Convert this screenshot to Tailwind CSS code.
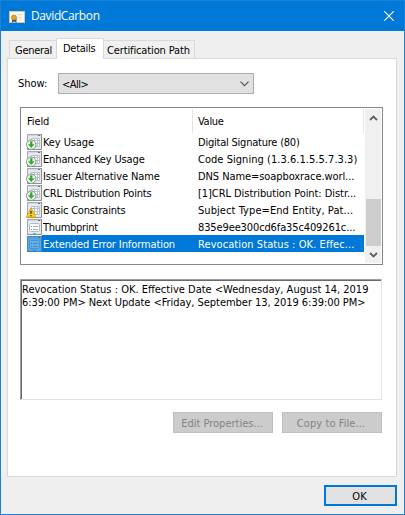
<!DOCTYPE html>
<html lang="en">
<head>
<meta charset="utf-8">
<title>DavidCarbon</title>
<script src="https://cdn.jsdelivr.net/npm/@tailwindcss/browser@4"></script>
</head>
<body class="w-[405px] h-[515px] overflow-hidden font-['DejaVu_Sans_Condensed','DejaVu_Sans',sans-serif] text-[11px] leading-[13px] text-black whitespace-nowrap">

<svg class="hidden">
  <defs>
    <g id="doc">
      <rect x="1" y="0" width="15" height="16" fill="#e6eaee"/>
      <path d="M1.5 16V.5H15" fill="none" stroke="#a4a9ae"/>
      <path d="M1 15.5h14.5V0" fill="none" stroke="#8b9197"/>
      <path d="M2 1.5h13" stroke="#d3d7db"/>
      <path d="M12 1.5h2" stroke="#6d747b"/>
    </g>
    <g id="table">
      <rect x="5" y="4" width="9" height="9" fill="#fff"/>
      <path d="M5.5 4.5h8v8h-8zM5.5 6.5h8M5.5 9.5h8M8.5 4.5v8M11.5 4.5v8" fill="none" stroke="#b9c0ca"/>
    </g>
    <g id="down">
      <use href="#doc"/><use href="#table"/>
      <circle cx="5.2" cy="10.7" r="4.7" fill="#fcfdfc" stroke="#868e88"/>
      <path d="M4.2 7.4h2v3h2L5.2 13.8 2.2 10.4h2z" fill="#2fae2b" stroke="#1f9c20" stroke-width=".4"/>
    </g>
    <g id="warn">
      <use href="#doc"/><use href="#table"/>
      <path d="M5 6 9.8 15.2H.2z" fill="#f6d21c" stroke="#cfa310" stroke-width=".9" stroke-linejoin="round"/>
      <path d="M5 8.8v3.2M5 13v1.2" stroke="#3d3106" stroke-width="1.2"/>
    </g>
    <g id="prop">
      <use href="#doc"/>
      <rect x="3.5" y="4.5" width="10" height="8" rx="1" fill="#fff" stroke="#b4bac3"/>
      <path d="M5 7.5h1M5 10.5h1" stroke="#4f9fd4"/>
      <path d="M7 7.5h5M7 10.5h5" stroke="#a4aab1"/>
      <path d="M7 14.5h3" stroke="#35c4ee"/>
    </g>
  </defs>
</svg>

<div class="w-full h-full flex flex-col border border-[#1883d7] bg-[#efefef]">
  <header class="h-[30px] shrink-0 bg-[#0078d7] text-white flex items-center pl-2 pr-[10px]">
    <svg class="w-4 h-3 shrink-0 mt-px" viewBox="0 0 16 12">
      <rect x=".5" y=".5" width="15" height="11" fill="#fbf7ee" stroke="#d9c8ac"/>
      <path d="M8 3.5h5M9 6.5h4" stroke="#e4dccd"/>
      <path d="M3 7h4.5v5L5.2 10.6 3 12z" fill="#2e5da8"/>
      <circle cx="5" cy="6.5" r="2.6" fill="#e3a31b" stroke="#b67a0a" stroke-width=".6"/>
    </svg>
    <span class="ml-[6px] font-['Open_Sans',sans-serif] text-[12px] leading-4 tracking-[-0.38px]">DavidCarbon</span>
    <svg class="ml-auto mb-px w-[10px] h-[10px]" viewBox="0 0 10 10"><path d="M.3 .3 9.7 9.7M9.7 .3 .3 9.7" stroke="#fff" stroke-width="1.1"/></svg>
  </header>

  <nav class="h-[27px] shrink-0 flex items-end pl-[8px] pt-[7px] relative z-10">
    <div class="w-[47px] h-[18px] border border-b-0 border-r-0 border-[#d9d9d9] bg-[#f0f0f0] pl-[5px] pt-[3px] tracking-[-0.29px]">General</div>
    <div class="w-[48px] h-[21px] -mb-px border border-b-0 border-[#d9d9d9] bg-white pl-[6px] pt-[3px] tracking-[-0.27px]">Details</div>
    <div class="w-[91px] h-[18px] border border-b-0 border-l-0 border-[#d9d9d9] bg-[#f0f0f0] pl-[3px] pt-[3px] tracking-[-0.13px]">Certification Path</div>
  </nav>

  <main class="ml-[6px] w-[390px] h-[419px] shrink-0 bg-white border border-[#d9d9d9] pl-[12px] flex flex-col items-start">
    <div class="flex items-center mt-[14px] h-[21px] -ml-[2px]">
      <span class="w-[39px]">Show:</span>
      <div class="w-[196px] h-[21px] bg-[#e1e1e1] border border-[#adadad] flex items-center pl-[3px] pr-[4px] ml-px">
        <span class="tracking-[-0.5px] pt-[2px]">&lt;All&gt;</span>
        <svg class="ml-auto w-[9px] h-[6px]" viewBox="0 0 9 6"><path d="M.5 .7 4.5 4.7 8.5 .7" fill="none" stroke="#555" stroke-width="1.2"/></svg>
      </div>
    </div>

    <section class="mt-[13px] w-[363px] h-[158px] border border-[#828790] flex p-px">
      <div class="w-[343px] flex flex-col">
        <div class="h-[24px] flex items-center">
          <span class="w-[171px] h-full border-r border-[#e5e5e5] pl-[5px] pt-[6px] tracking-[-0.1px]">Field</span>
          <span class="w-[171px] h-full border-r border-[#e5e5e5] pl-[5px] pt-[6px] tracking-[-0.3px]">Value</span>
        </div>
        <div class="h-[17px] flex items-center"><svg class="w-4 h-4 ml-[4px] shrink-0"><use href="#down"/></svg><span class="w-[155px] ml-px pt-[2px] tracking-[-0.1px]">Key Usage</span><span class="pt-[2px] tracking-[-0.22px]">Digital Signature (80)</span></div>
        <div class="h-[17px] flex items-center"><svg class="w-4 h-4 ml-[4px] shrink-0"><use href="#down"/></svg><span class="w-[155px] ml-px pt-[2px] tracking-[-0.13px]">Enhanced Key Usage</span><span class="pt-[2px] tracking-[0.04px]">Code Signing (1.3.6.1.5.5.7.3.3)</span></div>
        <div class="h-[17px] flex items-center"><svg class="w-4 h-4 ml-[4px] shrink-0"><use href="#down"/></svg><span class="w-[155px] ml-px pt-[2px] tracking-[-0.12px]">Issuer Alternative Name</span><span class="pt-[2px] tracking-[-0.08px]">DNS Name=soapboxrace.worl...</span></div>
        <div class="h-[17px] flex items-center"><svg class="w-4 h-4 ml-[4px] shrink-0"><use href="#down"/></svg><span class="w-[155px] ml-px pt-[2px] tracking-[-0.2px]">CRL Distribution Points</span><span class="pt-[2px] tracking-[-0.06px]">[1]CRL Distribution Point: Distr...</span></div>
        <div class="h-[17px] flex items-center"><svg class="w-4 h-4 ml-[4px] shrink-0"><use href="#warn"/></svg><span class="w-[155px] ml-px pt-[2px] tracking-[-0.2px]">Basic Constraints</span><span class="pt-[2px] tracking-[0.07px]">Subject Type=End Entity, Pat...</span></div>
        <div class="h-[17px] flex items-center"><svg class="w-4 h-4 ml-[4px] shrink-0"><use href="#prop"/></svg><span class="w-[155px] ml-px pt-[2px] tracking-[-0.3px]">Thumbprint</span><span class="pt-[2px] tracking-[-0.12px]">835e9ee300cd6fa35c409261c...</span></div>
        <div class="h-[17px] flex items-center text-white">
          <div class="w-4 h-4 ml-[4px] shrink-0 relative"><svg class="w-4 h-4"><use href="#prop"/></svg><div class="absolute left-px top-0 w-[15px] h-4 bg-[#0078d7]/60"></div></div>
          <div class="flex-1 h-[17px] mr-px flex items-center bg-[#0078d7]"><span class="w-[155px] ml-px pt-[2px] tracking-[-0.1px]">Extended Error Information</span><span class="pt-[2px] tracking-[0.08px]">Revocation Status : OK. Effec...</span></div>
        </div>
      </div>
      <div class="w-[16px] h-[154px] bg-[#f0f0f0] flex flex-col items-center">
        <svg class="w-[9px] h-[6px] mt-[6px]" viewBox="0 0 9 6"><path d="M1 5 4.5 1.5 8 5" fill="none" stroke="#606060" stroke-width="1.8"/></svg>
        <div class="mt-[78px] w-[15px] h-[47px] bg-[#cdcdcd]"></div>
        <svg class="w-[9px] h-[6px] mt-[6px]" viewBox="0 0 9 6"><path d="M1 1 4.5 4.5 8 1" fill="none" stroke="#606060" stroke-width="1.8"/></svg>
      </div>
    </section>

    <section class="mt-[14px] w-[362px] h-[121px] border border-t-[#a0a0a0] border-l-[#a0a0a0] border-r-[#e3e3e3] border-b-[#e3e3e3]">
      <div class="w-full h-full border-t border-l border-[#696969] pt-[2px]">
        <p>Revocation Status : OK. Effective Date &lt;Wednesday, August 14, 2019</p>
        <p class="tracking-[-0.04px]">6:39:00 PM&gt; Next Update &lt;Friday, September 13, 2019 6:39:00 PM&gt;</p>
      </div>
    </section>

    <div class="mt-[12px] ml-[153px] flex gap-[9px] text-[#838383]">
      <div class="w-[100px] h-[21px] bg-[#ccc] border border-[#bfbfbf] flex items-center justify-center pt-px pr-[2px]">Edit Properties...</div>
      <div class="w-[100px] h-[21px] bg-[#ccc] border border-[#bfbfbf] flex items-center justify-center pt-px pr-[2px] tracking-[0.08px]">Copy to File...</div>
    </div>
  </main>

  <div class="mt-[8px] ml-[323px] w-[73px] h-[21px] shrink-0 bg-[#e1e1e1] border-2 border-[#0078d7] flex items-center justify-center pt-px pr-[2px]">OK</div>
</div>
</body>
</html>
